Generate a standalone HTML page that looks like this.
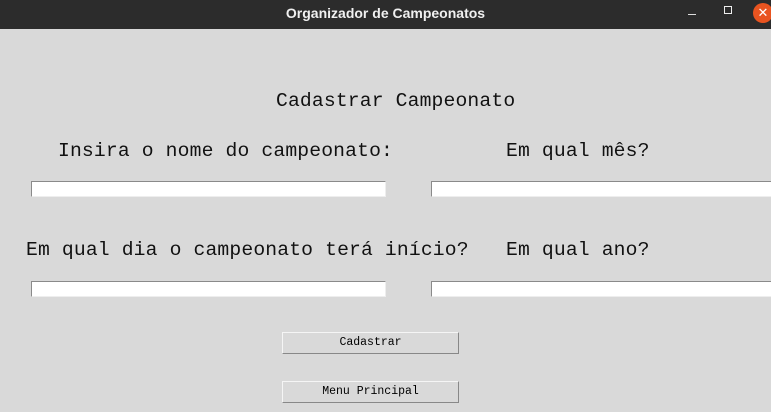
<!DOCTYPE html>
<html><head><meta charset="utf-8"><style>
*{margin:0;padding:0;box-sizing:border-box}
body{width:771px;height:412px;background:#d9d9d9;position:relative;overflow:hidden;font-family:"Liberation Mono","DejaVu Sans Mono",monospace;color:#000}
.bar{position:absolute;left:0;top:0;width:771px;height:29px;background:#2c2c2c;color:#f0f0f0;font-family:"Liberation Sans",sans-serif;font-weight:bold;font-size:14px;text-align:center;line-height:27px}
.t{position:absolute;font-size:19.7px;line-height:24px;white-space:pre;letter-spacing:0.15px;color:#111}
.e{position:absolute;height:16px;background:#fff;border:1px solid #8a8a8a;border-right-color:#eee;border-bottom-color:#eee}
.b{position:absolute;left:282px;width:177px;height:22px;background:#d9d9d9;border:1px solid #f5f5f5;border-right-color:#888;border-bottom-color:#888;font-size:11.5px;text-align:center;line-height:20px}
</style></head><body>
<div class="bar">Organizador de Campeonatos</div>
<div style="position:absolute;left:688px;top:14px;width:8px;height:1px;background:#ddd"></div>
<div style="position:absolute;left:724px;top:6px;width:8px;height:8px;border:1px solid #eee"></div>
<div style="position:absolute;left:753px;top:3px;width:20px;height:20px;border-radius:50%;background:#e95420;color:#fff;font-family:'Liberation Sans',sans-serif;font-size:13px;line-height:20px;text-align:center">✕</div>
<div class="t" style="left:276px;top:89px">Cadastrar Campeonato</div>
<div class="t" style="left:58px;top:139px">Insira o nome do campeonato:</div>
<div class="t" style="left:506px;top:139px">Em qual mês?</div>
<div class="e" style="left:31px;top:181px;width:355px"></div>
<div class="e" style="left:431px;top:181px;width:345px"></div>
<div class="t" style="left:26px;top:238px">Em qual dia o campeonato terá início?</div>
<div class="t" style="left:506px;top:238px">Em qual ano?</div>
<div class="e" style="left:31px;top:281px;width:355px"></div>
<div class="e" style="left:431px;top:281px;width:345px"></div>
<div class="b" style="top:332px">Cadastrar</div>
<div class="b" style="top:381px">Menu Principal</div>
</body></html>
